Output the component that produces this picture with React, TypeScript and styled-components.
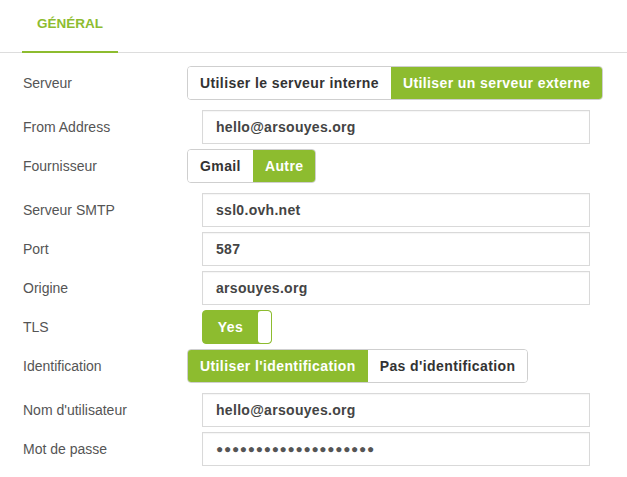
import React from "react";
import styled, { createGlobalStyle } from "styled-components";

const GREEN = "#8dbc2f";

const Global = createGlobalStyle`
  html, body { margin: 0; padding: 0; background: #fff; }
  body { font-family: "Liberation Sans", Arial, sans-serif; }
  * { box-sizing: border-box; }
`;

const Page = styled.div`
  width: 627px;
  height: 477px;
  background: #fff;
  overflow: hidden;
`;

const TabBar = styled.div`
  display: flex;
  height: 53px;
  border-bottom: 1px solid #dddddd;
  padding-left: 22px;
`;

const Tab = styled.div<{ $active?: boolean }>`
  width: 96px;
  height: 53px;
  display: flex;
  align-items: center;
  justify-content: center;
  padding-bottom: 4px;
  font-size: 13.5px;
  font-weight: bold;
  color: ${GREEN};
  border-bottom: 2px solid ${(p) => (p.$active ? GREEN : "transparent")};
  margin-bottom: -1px;
`;

const Form = styled.div`
  padding: 13px 0 0 23px;
  display: flex;
  flex-direction: column;
`;

const Row = styled.div<{ $gap: number }>`
  display: grid;
  grid-template-columns: 164px 1fr;
  align-items: center;
  margin-bottom: ${(p) => p.$gap}px;
`;

const Label = styled.div`
  font-size: 14px;
  color: #555;
`;

const Group = styled.div`
  display: flex;
  justify-self: start;
  height: 34px;
  border: 1px solid #cfcfcf;
  border-radius: 4px;
  overflow: hidden;
`;

const Seg = styled.div<{ $active?: boolean }>`
  display: flex;
  align-items: center;
  padding: 0 12px;
  font-size: 14px;
  letter-spacing: 0.4px;
  font-weight: bold;
  color: ${(p) => (p.$active ? "#fff" : "#333")};
  background: ${(p) => (p.$active ? GREEN : "#fff")};
  white-space: nowrap;
`;

const Input = styled.div`
  margin-left: 15px;
  width: 388px;
  height: 34px;
  border: 1px solid #d9d9d9;
  box-shadow: inset 0 1px 1px rgba(0, 0, 0, 0.04);
  display: flex;
  align-items: center;
  padding-left: 13px;
  font-size: 14px;
  letter-spacing: 0.3px;
  font-weight: bold;
  color: #444;
`;

const Dots = styled.span`
  font-size: 12px;
  letter-spacing: 0.7px;
  color: #555;
`;

const Toggle = styled.div`
  margin-left: 15px;
  width: 70px;
  height: 34px;
  border: 1px solid ${GREEN};
  border-radius: 4px;
  background: ${GREEN};
  display: flex;
  overflow: hidden;
`;

const ToggleLabel = styled.div`
  flex: 1;
  display: flex;
  align-items: center;
  justify-content: center;
  font-size: 14px;
  letter-spacing: 0.5px;
  font-weight: bold;
  color: #fff;
`;

const Knob = styled.div`
  width: 13px;
  background: #fff;
  border-radius: 3px;
`;

export default function App() {
  return (
    <Page>
      <Global />
      <TabBar>
        <Tab $active>GÉNÉRAL</Tab>
      </TabBar>
      <Form>
        <Row $gap={10}>
          <Label>Serveur</Label>
          <Group>
            <Seg>Utiliser le serveur interne</Seg>
            <Seg $active>Utiliser un serveur externe</Seg>
          </Group>
        </Row>
        <Row $gap={5}>
          <Label>From Address</Label>
          <Input>hello@arsouyes.org</Input>
        </Row>
        <Row $gap={10}>
          <Label>Fournisseur</Label>
          <Group>
            <Seg>Gmail</Seg>
            <Seg $active>Autre</Seg>
          </Group>
        </Row>
        <Row $gap={5}>
          <Label>Serveur SMTP</Label>
          <Input>ssl0.ovh.net</Input>
        </Row>
        <Row $gap={5}>
          <Label>Port</Label>
          <Input>587</Input>
        </Row>
        <Row $gap={5}>
          <Label>Origine</Label>
          <Input>arsouyes.org</Input>
        </Row>
        <Row $gap={5}>
          <Label>TLS</Label>
          <Toggle>
            <ToggleLabel>Yes</ToggleLabel>
            <Knob />
          </Toggle>
        </Row>
        <Row $gap={10}>
          <Label>Identification</Label>
          <Group>
            <Seg $active>Utiliser l'identification</Seg>
            <Seg>Pas d'identification</Seg>
          </Group>
        </Row>
        <Row $gap={5}>
          <Label>Nom d'utilisateur</Label>
          <Input>hello@arsouyes.org</Input>
        </Row>
        <Row $gap={5}>
          <Label>Mot de passe</Label>
          <Input>
            <Dots>{"●".repeat(20)}</Dots>
          </Input>
        </Row>
      </Form>
    </Page>
  );
}
